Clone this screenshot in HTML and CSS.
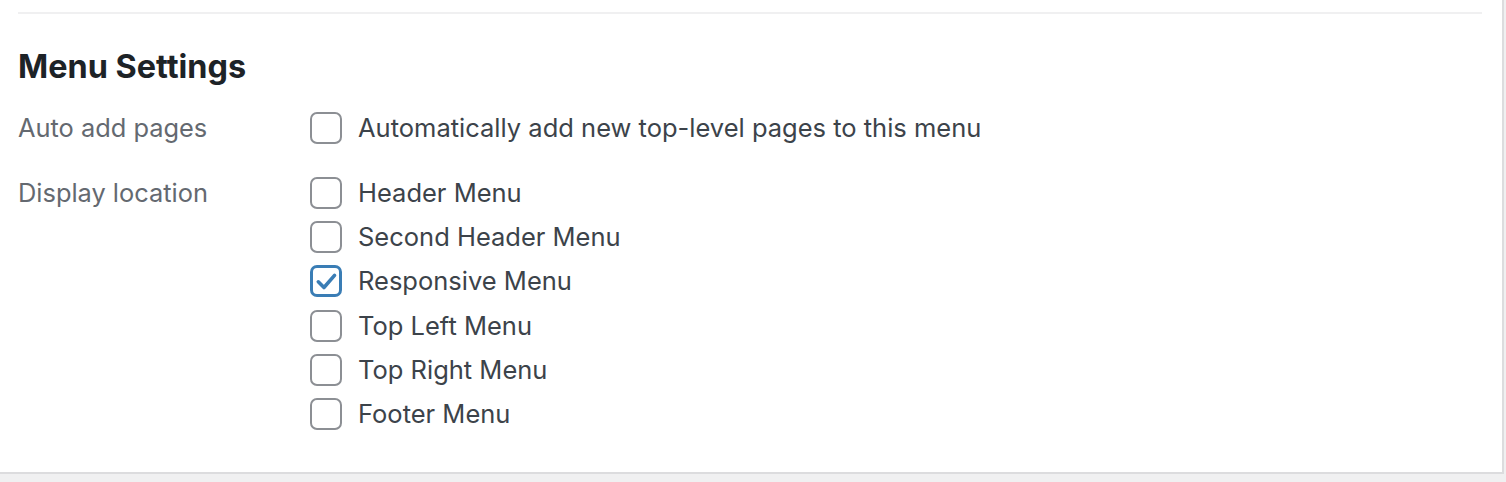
FILE: index.html
```html
<!DOCTYPE html>
<html lang="en">

<head>
    <meta charset="UTF-8">
    <meta name="viewport" content="width=device-width, initial-scale=1.0">
    <title>Menu Settings</title>
    <link rel="stylesheet" href="styles.css">
</head>

<body>
    <div class="panel">
        <div class="rule"></div>
        <h2 class="title">Menu Settings</h2>

        <div class="setting auto-add">
            <div class="setting-label">Auto add pages</div>
            <div class="options">
                <label class="option">
                    <span class="box"></span>
                    <span>Automatically add new top-level pages to this menu</span>
                </label>
            </div>
        </div>

        <div class="setting">
            <div class="setting-label">Display location</div>
            <div class="options">
                <label class="option">
                    <span class="box"></span>
                    <span>Header Menu</span>
                </label>
                <label class="option">
                    <span class="box"></span>
                    <span>Second Header Menu</span>
                </label>
                <label class="option">
                    <span class="box checked">
                        <svg viewBox="0 0 32 32" width="30" height="30">
                            <path d="M6.5 17 L13.5 24 L26.5 9" fill="none" stroke="#3a7db5" stroke-width="4.4" stroke-linecap="round" stroke-linejoin="round"/>
                        </svg>
                    </span>
                    <span>Responsive Menu</span>
                </label>
                <label class="option">
                    <span class="box"></span>
                    <span>Top Left Menu</span>
                </label>
                <label class="option">
                    <span class="box"></span>
                    <span>Top Right Menu</span>
                </label>
                <label class="option">
                    <span class="box"></span>
                    <span>Footer Menu</span>
                </label>
            </div>
        </div>
    </div>
</body>

</html>
```

FILE: styles.css
```css
body {
    margin: 0;
    padding: 0;
    background-color: #f0f0f1;
    font-family: Inter, "Noto Sans", sans-serif;
    height: 482px;
    overflow: hidden;
}

.panel {
    box-sizing: border-box;
    width: 1504px;
    height: 474px;
    background-color: #fff;
    border-right: 2px solid #dcdcde;
    border-bottom: 2px solid #dcdcde;
    padding: 12px 20px 0 18px;
}

.rule {
    height: 2px;
    background-color: #f0f0f1;
}

.title {
    margin: 34px 0 0;
    font-size: 32.4px;
    line-height: 38px;
    font-weight: 700;
    color: #1d2327;
}

.setting {
    display: flex;
}

.auto-add {
    margin-top: 26px;
    margin-bottom: 33px;
}

.setting-label {
    width: 292px;
    font-size: 25.4px;
    line-height: 32px;
    color: #646970;
}

.options {
    display: flex;
    flex-direction: column;
    gap: 12.2px;
}

.option {
    display: flex;
    align-items: center;
    gap: 16px;
    font-size: 25.5px;
    line-height: 32px;
    color: #3c434a;
}

.box {
    box-sizing: border-box;
    width: 32px;
    height: 32px;
    border: 2px solid #8c8f94;
    border-radius: 7px;
    display: flex;
    align-items: center;
    justify-content: center;
}

.box.checked {
    border: 3px solid #3a7db5;
}
```
